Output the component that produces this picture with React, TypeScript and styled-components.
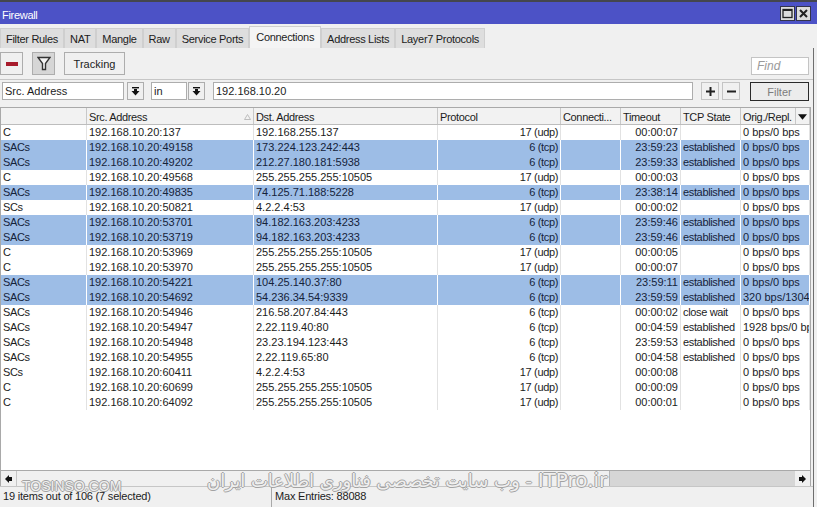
import styled, { createGlobalStyle } from 'styled-components'

const GlobalStyle = createGlobalStyle`
  html, body {
    margin: 0;
    padding: 0;
    background: #f0f0f0;
  }
  * {
    box-sizing: border-box;
  }
`

const COLUMNS = '86px 167px 184px 123px 60px 60px 60px 69px'
const HEADER_COLUMNS = '86px 167px 184px 123px 60px 60px 60px 55px 14px'

const Window = styled.div`
  width: 817px;
  height: 507px;
  position: relative;
  overflow: hidden;
  display: flex;
  flex-direction: column;
  background: #f0f0f0;
  border-top: 2px solid #44464e;
  font-family: "Liberation Sans", Arial, sans-serif;
  font-size: 11px;
  color: #1c1c1c;
`

const TitleBar = styled.div`
  height: 22px;
  flex: none;
  background: #4c52c6;
  color: #fff;
  display: flex;
  align-items: center;
  justify-content: space-between;
  padding: 0 6px 0 2px;
  font-size: 11px;
  letter-spacing: -0.3px;
`

const TitleLabel = styled.span`
  padding-top: 3px;
`

const TitleButtons = styled.div`
  display: flex;
  gap: 1px;
`

const TitleButton = styled.div`
  width: 15px;
  height: 15px;
  background: #dcdcdc;
  border: 1px solid #33344a;
  display: flex;
  align-items: center;
  justify-content: center;
`

const TabStrip = styled.div`
  height: 24px;
  flex: none;
  display: flex;
  align-items: flex-end;
  padding-left: 0;
  letter-spacing: -0.3px;
`

const Tab = styled.div<{ $active?: boolean }>`
  height: ${p => (p.$active ? 22 : 20)}px;
  padding: ${p => (p.$active ? '0 6px 2px' : '1px 5px 0')};
  display: flex;
  align-items: center;
  background: ${p => (p.$active ? '#f4f4f4' : '#dedede')};
  border: 1px solid #cfcfcf;
  border-bottom: none;
  font-size: 11px;
`

const Toolbar = styled.div`
  height: 31px;
  flex: none;
  display: flex;
  align-items: flex-start;
  padding: 4px 0 0;
  gap: 9px;
`

const ToolButton = styled.div<{ $pressed?: boolean }>`
  height: 23px;
  min-width: 23px;
  display: flex;
  align-items: center;
  justify-content: center;
  border: 1px solid #adadad;
  background: ${p => (p.$pressed ? '#d6d6d6' : '#f0f0f0')};
`

const TrackingButton = styled(ToolButton)`
  width: 61px;
  font-size: 11px;
`

const FindInput = styled.div`
  width: 58px;
  height: 18px;
  margin-left: auto;
  margin-right: 8px;
  margin-top: 5px;
  padding: 0 5px;
  display: flex;
  align-items: center;
  background: #fff;
  border: 1px solid #c4c4c4;
  color: #9a9a9a;
  font-style: italic;
  font-size: 12px;
`

const FilterBar = styled.div`
  height: 28px;
  flex: none;
  display: flex;
  align-items: flex-start;
  padding: 2px 8px 0 2px;
  border-top: 1px solid #c6c6c6;
`

const Field = styled.div<{ $width?: number }>`
  height: 18px;
  width: ${p => (p.$width ? `${p.$width}px` : 'auto')};
  flex: ${p => (p.$width ? 'none' : '1')};
  background: #fff;
  border: 1px solid #adadad;
  display: flex;
  align-items: center;
  padding: 0 2px;
  font-size: 11px;
`

const ArrowButton = styled.div<{ $before: number; $after: number }>`
  width: 17px;
  height: 18px;
  margin-left: ${p => p.$before}px;
  margin-right: ${p => p.$after}px;
  flex: none;
  border: 1px solid #adadad;
  background: #f0f0f0;
  display: flex;
  align-items: center;
  justify-content: center;
`

const SignButton = styled.div<{ $before: number }>`
  width: 18px;
  height: 18px;
  flex: none;
  margin-left: ${p => p.$before}px;
  border: 1px solid #c4c4c4;
  background: #f0f0f0;
  display: flex;
  align-items: center;
  justify-content: center;
`

const FilterButton = styled.div`
  width: 59px;
  height: 19px;
  flex: none;
  margin-left: 10px;
  border: 1px solid #2a2a2a;
  background: #ececec;
  color: #7d7d7d;
  display: flex;
  align-items: center;
  justify-content: center;
  font-size: 11px;
`

const TableFrame = styled.div`
  flex: 1;
  min-height: 0;
  margin-right: 6px;
  display: flex;
  flex-direction: column;
  background: #fff;
  border: 1px solid #a9a9a9;
  border-bottom: none;
  overflow: hidden;
`

const HeaderRow = styled.div`
  height: 17px;
  flex: none;
  display: grid;
  grid-template-columns: ${HEADER_COLUMNS};
  background: #f2f2f2;
  border-bottom: 1px solid #bdbdbd;
`

const HeaderCell = styled.div`
  padding: 1px 2px 0;
  display: flex;
  align-items: center;
  justify-content: space-between;
  white-space: nowrap;
  overflow: hidden;
  border-right: 1px solid #c8c8c8;
  font-size: 11px;
  letter-spacing: -0.35px;
`

const Rows = styled.div`
  flex: 1;
  min-height: 0;
`

const Row = styled.div<{ $selected?: boolean }>`
  height: 15px;
  display: grid;
  grid-template-columns: ${COLUMNS};
  background: ${p => (p.$selected ? '#9dbde6' : '#fff')};
`

const Cell = styled.div<{ $right?: boolean; $selected?: boolean; $tight?: boolean }>`
  padding: 0 2px;
  line-height: 15px;
  white-space: nowrap;
  overflow: hidden;
  text-align: ${p => (p.$right ? 'right' : 'left')};
  border-right: 1px solid ${p => (p.$selected ? '#ffffff' : '#e2e2e2')};
  font-size: 11px;
  letter-spacing: ${p => (p.$tight ? '-0.35px' : '0')};
  color: ${p => (p.$selected ? '#15233a' : '#1c1c1c')};
`

const ScrollBar = styled.div`
  height: 16px;
  flex: none;
  display: flex;
  border-top: 1px solid #a9a9a9;
  background: #f0f0f0;
`

const ScrollArrow = styled.div`
  width: 15px;
  flex: none;
  display: flex;
  align-items: center;
  justify-content: center;
  background: #f0f0f0;
`

const ScrollThumb = styled.div`
  width: 186px;
  flex: none;
  background: #d6d6d6;
  border-left: 1px solid #b4b4b4;
`

const ScrollGap = styled.div`
  flex: 1;
  border-left: 1px solid #c6c6c6;
`

const StatusBar = styled.div`
  height: 21px;
  flex: none;
  display: flex;
  background: #f0f0f0;
  border-top: 1px solid #c6c6c6;
  font-size: 11px;
  letter-spacing: -0.2px;
`

const StatusCell = styled.div<{ $width?: number }>`
  width: ${p => (p.$width ? `${p.$width}px` : 'auto')};
  padding: 3px 2px 0 3px;
  border-right: 1px solid ${p => (p.$width ? '#a9a9a9' : 'transparent')};
`

const Watermark = styled.div`
  position: absolute;
  left: 22px;
  top: 476px;
  font-size: 14px;
  white-space: nowrap;
  color: #efefef;
  text-shadow: -1px 0 #a2a2a2, 1px 0 #a2a2a2, 0 -1px #a2a2a2, 0 1px #a2a2a2;
`

const PersianMark = styled(Watermark)`
  left: 207px;
  top: 466px;
  font-family: "DejaVu Sans", sans-serif;
  font-size: 18px;
`

const LatinPart = styled.span`
  font-size: 20px;
`

const SideLine = styled.div`
  position: absolute;
  right: 0;
  top: 46px;
  bottom: 0;
  width: 4px;
  background: #f0f0f0;
  border-left: 1px solid #6e6e6e;
`

const headers = ['', 'Src. Address', 'Dst. Address', 'Protocol', 'Connecti...', 'Timeout', 'TCP State', 'Orig./Repl.', '']

type Conn = [string, string, string, string, string, string, string, boolean]

const ZERO = '0 bps/0 bps'

const connections: Conn[] = [
  ['C', '192.168.10.20:137', '192.168.255.137', '17 (udp)', '00:00:07', '', ZERO, false],
  ['SACs', '192.168.10.20:49158', '173.224.123.242:443', '6 (tcp)', '23:59:23', 'established', ZERO, true],
  ['SACs', '192.168.10.20:49202', '212.27.180.181:5938', '6 (tcp)', '23:59:33', 'established', ZERO, true],
  ['C', '192.168.10.20:49568', '255.255.255.255:10505', '17 (udp)', '00:00:03', '', ZERO, false],
  ['SACs', '192.168.10.20:49835', '74.125.71.188:5228', '6 (tcp)', '23:38:14', 'established', ZERO, true],
  ['SCs', '192.168.10.20:50821', '4.2.2.4:53', '17 (udp)', '00:00:02', '', ZERO, false],
  ['SACs', '192.168.10.20:53701', '94.182.163.203:4233', '6 (tcp)', '23:59:46', 'established', ZERO, true],
  ['SACs', '192.168.10.20:53719', '94.182.163.203:4233', '6 (tcp)', '23:59:46', 'established', ZERO, true],
  ['C', '192.168.10.20:53969', '255.255.255.255:10505', '17 (udp)', '00:00:05', '', ZERO, false],
  ['C', '192.168.10.20:53970', '255.255.255.255:10505', '17 (udp)', '00:00:07', '', ZERO, false],
  ['SACs', '192.168.10.20:54221', '104.25.140.37:80', '6 (tcp)', '23:59:11', 'established', ZERO, true],
  ['SACs', '192.168.10.20:54692', '54.236.34.54:9339', '6 (tcp)', '23:59:59', 'established', '320 bps/1304', true],
  ['SACs', '192.168.10.20:54946', '216.58.207.84:443', '6 (tcp)', '00:00:02', 'close wait', ZERO, false],
  ['SACs', '192.168.10.20:54947', '2.22.119.40:80', '6 (tcp)', '00:04:59', 'established', '1928 bps/0 bp', false],
  ['SACs', '192.168.10.20:54948', '23.23.194.123:443', '6 (tcp)', '23:59:53', 'established', ZERO, false],
  ['SACs', '192.168.10.20:54955', '2.22.119.65:80', '6 (tcp)', '00:04:58', 'established', ZERO, false],
  ['SCs', '192.168.10.20:60411', '4.2.2.4:53', '17 (udp)', '00:00:08', '', ZERO, false],
  ['C', '192.168.10.20:60699', '255.255.255.255:10505', '17 (udp)', '00:00:09', '', ZERO, false],
  ['C', '192.168.10.20:64092', '255.255.255.255:10505', '17 (udp)', '00:00:01', '', ZERO, false],
]

function DropArrow() {
  return (
    <svg width="9" height="9" viewBox="0 0 9 9">
      <rect x="1" y="0" width="7" height="1.4" fill="#111" />
      <path d="M3 2h3v2h2.5L4.5 8.5.5 4H3z" fill="#111" />
    </svg>
  )
}

export default function App() {
  return (
    <Window>
      <GlobalStyle />
      <TitleBar>
        <TitleLabel>Firewall</TitleLabel>
        <TitleButtons>
          <TitleButton>
            <svg width="11" height="11" viewBox="0 0 11 11">
              <rect x="1" y="1.5" width="9" height="8" fill="none" stroke="#222" strokeWidth="1.3" />
              <rect x="1" y="1" width="9" height="2" fill="#222" />
            </svg>
          </TitleButton>
          <TitleButton>
            <svg width="11" height="11" viewBox="0 0 11 11">
              <path d="M2 2l7 7M9 2l-7 7" stroke="#222" strokeWidth="2" />
            </svg>
          </TitleButton>
        </TitleButtons>
      </TitleBar>

      <TabStrip>
        <Tab>Filter Rules</Tab>
        <Tab>NAT</Tab>
        <Tab>Mangle</Tab>
        <Tab>Raw</Tab>
        <Tab>Service Ports</Tab>
        <Tab $active>Connections</Tab>
        <Tab>Address Lists</Tab>
        <Tab>Layer7 Protocols</Tab>
      </TabStrip>

      <Toolbar>
        <ToolButton>
          <svg width="12" height="4" viewBox="0 0 12 4">
            <rect width="12" height="4" fill="#a81c2c" />
          </svg>
        </ToolButton>
        <ToolButton $pressed>
          <svg width="14" height="15" viewBox="0 0 14 15">
            <path d="M1 1.5h12L8.5 7.5v6h-3v-6z" fill="#f4f4f4" stroke="#333" strokeWidth="1.4" />
          </svg>
        </ToolButton>
        <TrackingButton>Tracking</TrackingButton>
        <FindInput>Find</FindInput>
      </Toolbar>

      <FilterBar>
        <Field $width={122}>Src. Address</Field>
        <ArrowButton $before={3} $after={7}>
          <DropArrow />
        </ArrowButton>
        <Field $width={36}>in</Field>
        <ArrowButton $before={1} $after={8}>
          <DropArrow />
        </ArrowButton>
        <Field>192.168.10.20</Field>
        <SignButton $before={8}>
          <svg width="9" height="9" viewBox="0 0 9 9">
            <path d="M0 4.5h9M4.5 0v9" stroke="#222" strokeWidth="2" />
          </svg>
        </SignButton>
        <SignButton $before={3}>
          <svg width="9" height="9" viewBox="0 0 9 9">
            <path d="M0 4.5h9" stroke="#222" strokeWidth="2" />
          </svg>
        </SignButton>
        <FilterButton>Filter</FilterButton>
      </FilterBar>

      <TableFrame>
        <HeaderRow>
          {headers.map((h, i) => (
            <HeaderCell key={i}>
              {h}
              {i === 1 && (
                <svg width="7" height="6" viewBox="0 0 7 6">
                  <path d="M3.5 .5L6.5 5.5H.5z" fill="none" stroke="#bdbdbd" />
                </svg>
              )}
              {i === 8 && (
                <svg width="10" height="6" viewBox="0 0 10 6">
                  <path d="M0 0h10L5 6z" fill="#111" />
                </svg>
              )}
            </HeaderCell>
          ))}
        </HeaderRow>
        <Rows>
          {connections.map((c, i) => {
            const selected = c[7]
            return (
              <Row key={i} $selected={selected}>
                <Cell $selected={selected} $tight>{c[0]}</Cell>
                <Cell $selected={selected}>{c[1]}</Cell>
                <Cell $selected={selected}>{c[2]}</Cell>
                <Cell $selected={selected} $right $tight>{c[3]}</Cell>
                <Cell $selected={selected} />
                <Cell $selected={selected} $right>{c[4]}</Cell>
                <Cell $selected={selected} $tight>{c[5]}</Cell>
                <Cell $selected={selected}>{c[6]}</Cell>
              </Row>
            )
          })}
        </Rows>
        <ScrollBar>
          <ScrollArrow>
            <svg width="7" height="8" viewBox="0 0 7 8">
              <path d="M0 4l4-4v2h3v4H4v2z" fill="#111" />
            </svg>
          </ScrollArrow>
          <ScrollGap />
          <ScrollThumb />
          <ScrollArrow>
            <svg width="7" height="8" viewBox="0 0 7 8">
              <path d="M7 4L3 0v2H0v4h3v2z" fill="#111" />
            </svg>
          </ScrollArrow>
        </ScrollBar>
      </TableFrame>

      <StatusBar>
        <StatusCell $width={272}>19 items out of 106 (7 selected)</StatusCell>
        <StatusCell>Max Entries: 88088</StatusCell>
      </StatusBar>

      <SideLine />
      <Watermark>TOSINSO.COM</Watermark>
      <PersianMark dir="rtl">
        <LatinPart>ITPro.ir</LatinPart> - وب سایت تخصصی فناوری اطلاعات ایران
      </PersianMark>
    </Window>
  )
}
